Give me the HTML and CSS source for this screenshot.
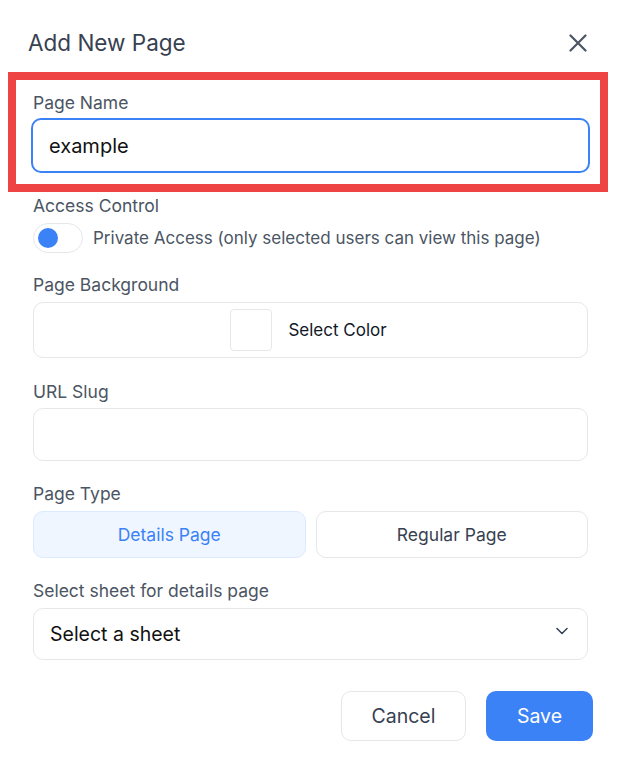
FILE: index.html
```html
<!DOCTYPE html>
<html lang="en">
<head>
<meta charset="utf-8">
<title>Add New Page</title>
<link rel="stylesheet" href="styles.css">
</head>
<body>
<div class="dialog">
  <div class="head">
    <h2 class="title">Add New Page</h2>
    <button class="close" type="button" aria-label="Close">
      <svg width="18" height="18" viewBox="0 0 18 18" fill="none" stroke="#4b5563" stroke-width="2.2" stroke-linecap="round"><path d="M1.5 1.5L16.5 16.5M16.5 1.5L1.5 16.5"/></svg>
    </button>
  </div>

  <div class="highlight">
    <label class="label label-hl">Page Name</label>
    <div class="input input-focus">example</div>
  </div>

  <div class="body">
    <div class="group group-access">
      <label class="label">Access Control</label>
      <div class="toggle-row">
        <span class="toggle"><span class="knob"></span></span>
        <span class="toggle-text">Private Access (only selected users can view this page)</span>
      </div>
    </div>

    <div class="group group-bg">
      <label class="label">Page Background</label>
      <div class="color-box">
        <span class="swatch"></span>
        <span class="color-text">Select Color</span>
      </div>
    </div>

    <div class="group group-slug">
      <label class="label">URL Slug</label>
      <div class="input input-plain"></div>
    </div>

    <div class="group group-type">
      <label class="label">Page Type</label>
      <div class="type-row">
        <button class="type-btn type-active" type="button">Details Page</button>
        <button class="type-btn" type="button">Regular Page</button>
      </div>
    </div>

    <div class="group group-sheet">
      <label class="label">Select sheet for details page</label>
      <div class="select">
        <span class="select-text">Select a sheet</span>
        <svg class="chev" width="12" height="8" viewBox="0 0 12 8" fill="none" stroke="#374151" stroke-width="1.5" stroke-linecap="round" stroke-linejoin="round"><path d="M1 1.5L6 6.5L11 1.5"/></svg>
      </div>
    </div>

    <div class="footer">
      <button class="btn btn-cancel" type="button">Cancel</button>
      <button class="btn btn-save" type="button">Save</button>
    </div>
  </div>
</div>
</body>
</html>
```
FILE: styles.css
```css
* { box-sizing: border-box; }
html, body { margin: 0; padding: 0; background: #ffffff; }
body {
  font-family: "Inter", "Noto Sans", "Liberation Sans", sans-serif;
  color: #4b5563;
}
.dialog { width: 620px; height: 770px; }

.head {
  display: flex;
  align-items: center;
  justify-content: space-between;
  padding: 26px 33px 0 28px;
  height: 60px;
}
.title {
  margin: 0;
  font-size: 22.5px;
  font-weight: 400;
  line-height: 34px;
  color: #374151;
}
.close {
  border: 0;
  background: none;
  padding: 0;
  width: 18px;
  height: 18px;
  display: flex;
}

.highlight {
  margin: 12px 12px 0 8px;
  border: 8px solid #ef4444;
  padding: 13px 10px 11px 15px;
}
.label {
  display: block;
  font-size: 17.5px;
  line-height: 20px;
  color: #4b5563;
}
.label-hl { margin-left: 2px; margin-bottom: 5px; }

.input {
  border-radius: 10px;
  background: #fff;
  font-size: 20px;
  color: #111111;
  display: flex;
  align-items: center;
}
.input-focus {
  height: 55px;
  border: 2px solid #3b82f6;
  padding-left: 16px;
}
.input-plain {
  height: 53px;
  border: 1px solid #e5e7eb;
}

.body { padding: 0 32px 0 33px; }
.group .label { margin-bottom: 7px; }
.group-access { margin-top: 4px; }
.group-access .label { margin-bottom: 7px; }
.group-bg { margin-top: 22px; }
.group-slug { margin-top: 24px; }
.group-slug .label { margin-bottom: 6px; }
.group-type { margin-top: 23px; }
.group-sheet { margin-top: 23px; }

.toggle-row { display: flex; align-items: center; gap: 10px; }
.toggle {
  width: 50px;
  height: 30px;
  border: 1px solid #e5e7eb;
  border-radius: 15px;
  display: flex;
  align-items: center;
  padding-left: 4px;
  background: #fff;
}
.knob {
  width: 20px;
  height: 20px;
  border-radius: 50%;
  background: #3b82f6;
}
.toggle-text { font-size: 17px; color: #4b5563; }

.color-box {
  height: 56px;
  border: 1px solid #e5e7eb;
  border-radius: 10px;
  display: flex;
  align-items: center;
  justify-content: center;
  gap: 16px;
}
.swatch {
  width: 42px;
  height: 42px;
  border: 1px solid #e5e7eb;
  border-radius: 4px;
  background: #fff;
}
.color-text { font-size: 17px; color: #111827; margin-right: 4px; }

.type-row { display: grid; grid-template-columns: 1fr 1fr; gap: 10px; }
.type-btn {
  height: 47px;
  border: 1px solid #e5e7eb;
  border-radius: 10px;
  background: #fff;
  font-family: inherit;
  font-size: 17.5px;
  color: #374151;
}
.type-active {
  background: #eff6ff;
  border-color: #dbeafe;
  color: #3b82f6;
}

.select {
  height: 52px;
  border: 1px solid #e5e7eb;
  border-radius: 10px;
  display: flex;
  align-items: center;
  justify-content: space-between;
  padding: 0 19px 0 16px;
}
.select-text { font-size: 19.5px; color: #111111; }
.chev { margin-top: -6px; }

.footer {
  margin-top: 31px;
  display: flex;
  justify-content: flex-end;
  gap: 20px;
  margin-right: -5px;
}
.btn {
  height: 50px;
  border-radius: 10px;
  font-family: inherit;
  font-size: 19.5px;
}
.btn-cancel {
  width: 125px;
  border: 1px solid #e5e7eb;
  background: #fff;
  color: #374151;
}
.btn-save {
  width: 107px;
  border: 0;
  background: #3b82f6;
  color: #fff;
}
```
